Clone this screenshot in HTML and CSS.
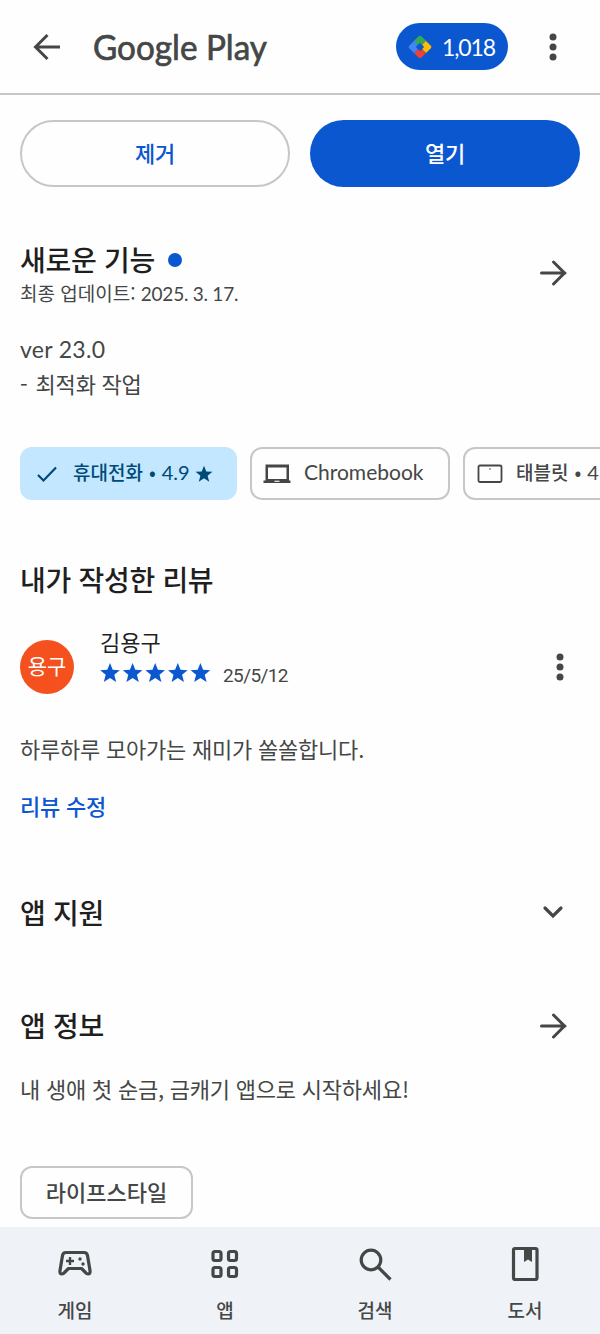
FILE: index.html
```html
<!DOCTYPE html>
<html lang="ko">
<head>
<meta charset="utf-8">
<title>Google Play</title>
<link rel="stylesheet" href="styles.css">
</head>
<body>
<div class="screen">
  <header class="topbar">
    <svg class="back" width="28" height="28" viewBox="0 0 28 28"><path d="M27 14H3M14.500 2L2.500 14l12 12" fill="none" stroke="#444746" stroke-width="3"/></svg>
    <svg class="brand" width="180" height="46" viewBox="0 0 180 46"><text x="0" y="35.500" textLength="174" lengthAdjust="spacingAndGlyphs">Google Play</text></svg>
    <div class="points">
      <svg width="24" height="24" viewBox="0 0 24 24">
        <g transform="rotate(45 12 12)">
          <path d="M12 12H3.500V5.500q0-2 2-2H12z" fill="#4285f4"/>
          <path d="M3.500 13V5.500q0-2 2-2H12.500V12z" fill="#34a853"/>
          <path d="M12 12V3.500h6.500q2 0 2 2V12z" fill="#fbbc04"/>
          <path d="M12 12h8.500v6.500q0 2-2 2H12z" fill="#ea4335"/>
          <path d="M12 12v8.500H5.500q-2 0-2-2V12z" fill="#4285f4"/>
          <rect x="9" y="9" width="6" height="6" rx="1" fill="#0b57d0"/>
        </g>
      </svg>
      <span>1,018</span>
    </div>
    <svg class="more" width="8" height="28" viewBox="0 0 8 28" fill="#444746"><circle cx="4" cy="4" r="3.500"/><circle cx="4" cy="14" r="3.500"/><circle cx="4" cy="24" r="3.500"/></svg>
  </header>

  <main class="content">
    <div class="actions">
      <button class="btn outline">제거</button>
      <button class="btn filled">열기</button>
    </div>

    <section class="whats-new">
      <div class="row">
        <div>
          <h2 class="title">새로운 기능<i class="dot"></i></h2>
          <p class="updated">최종 업데이트: <span class="date">2025. 3. 17.</span></p>
        </div>
        <svg class="arrow" width="28" height="28" viewBox="0 0 28 28"><path d="M2.500 14H26M14.500 3l11 11-11 11" /></svg>
      </div>
      <div class="body notes"><p class="version">ver 23.0</p><p><span class="dash">-</span> 최적화 작업</p></div>
    </section>

    <div class="devices">
      <div class="chip selected">
        <svg width="20" height="20" viewBox="0 0 20 20"><path d="M1 11l5.500 5.500L19 3.500" fill="none" stroke="#004a77" stroke-width="2.200"/></svg>
        <span class="phone">휴대전화<i class="sep">•</i><i class="score">4.9</i></span>
        <svg class="chip-star" width="18" height="18" viewBox="0 0 24 24"><path fill="#004a77" d="M12 1l3 7.700 8.200.4-6.400 5.200 2.200 8-7-4.500-7 4.500 2.200-8L.8 9.100 9 8.700z"/></svg>
      </div>
      <div class="chip laptop">
        <svg width="28" height="22" viewBox="0 0 28 22"><path d="M2.500 1.500H26V18H2.500z" fill="#444746"/><path d="M5 4.500h18.500v11.500H5z" fill="#fff"/><path d="M.5 17.500h27V20H.5z" fill="#444746"/><path d="M11.500 17.700h5v1.100h-5z" fill="#fff"/></svg>
        <span>Chromebook</span>
      </div>
      <div class="chip tablet">
        <svg width="26" height="20" viewBox="0 0 26 20"><rect x="1.500" y="1.500" width="23" height="16.500" rx="1.500" fill="none" stroke="#444746" stroke-width="1.800"/><circle cx="13" cy="5" r=".8" fill="#444746"/></svg>
        <span>태블릿<i class="sep">•</i><i class="score">4</i></span>
      </div>
    </div>

    <section class="review">
      <h2 class="title">내가 작성한 리뷰</h2>
      <div class="reviewer">
        <div class="avatar">용구</div>
        <div class="who">
          <div class="name">김용구</div>
          <div class="rating">
            <svg width="112" height="20" viewBox="0 0 112 20" fill="#0b57d0">
              <defs><path id="star" d="M10 0l2.700 6.800 7.100.4-5.500 4.600 1.900 7.200-6.200-4-6.200 4 1.900-7.200L.2 7.200l7.100-.4z"/></defs>
              <use href="#star"/><use href="#star" x="22.600"/><use href="#star" x="45.200"/><use href="#star" x="67.800"/><use href="#star" x="90.400"/>
            </svg>
            <span>25/5/12</span>
          </div>
        </div>
        <svg class="review-more" width="8" height="28" viewBox="0 0 8 28" fill="#444746"><circle cx="4" cy="4" r="3.500"/><circle cx="4" cy="14" r="3.500"/><circle cx="4" cy="24" r="3.500"/></svg>
      </div>
      <p class="body comment">하루하루 모아가는 재미가 쏠쏠합니다.</p>
      <a class="edit">리뷰 수정</a>
    </section>

    <section class="row support">
      <h2 class="title">앱 지원</h2>
      <svg class="arrow" width="28" height="28" viewBox="0 0 28 28"><path d="M6 10l8 8 8-8"/></svg>
    </section>

    <section class="row about">
      <h2 class="title">앱 정보</h2>
      <svg class="arrow" width="28" height="28" viewBox="0 0 28 28"><path d="M2.500 14H26M14.500 3l11 11-11 11" /></svg>
    </section>
    <p class="body tagline">내 생애 첫 순금, 금캐기 앱으로 시작하세요!</p>
    <div class="chip category"><span>라이프스타일</span></div>
  </main>

  <nav class="bottom">
    <a><svg width="36" height="36" viewBox="0 0 36 36"><path d="M9 7.500h18q3 0 3.500 3l2.500 15q.4 3.500-1.900 3.500-1.500 0-2.600-1.500L24.500 23.500H11.500l-4 4Q6.400 29 4.900 29 2.600 29 3 25.500l2.500-15q.5-3 3.500-3z" fill="none" stroke="#444746" stroke-width="3.200" stroke-linejoin="round"/><path d="M13 12v8M9 16h8" stroke="#444746" stroke-width="2.400"/><circle cx="23" cy="14" r="1.700" fill="#444746"/><circle cx="26" cy="19" r="1.700" fill="#444746"/></svg>게임</a>
    <a><svg width="36" height="36" viewBox="0 0 36 36" fill="none" stroke="#444746" stroke-width="3.200"><rect x="6" y="6.500" width="8" height="9" rx="2"/><rect x="21.500" y="6.500" width="8" height="9" rx="2"/><rect x="6" y="22.500" width="8" height="9" rx="2"/><rect x="21.500" y="22.500" width="8" height="9" rx="2"/></svg>앱</a>
    <a><svg width="36" height="36" viewBox="0 0 36 36" fill="none" stroke="#444746" stroke-width="3.200"><circle cx="14" cy="15" r="9.800"/><path d="M21 22l12.500 12.500"/></svg>검색</a>
    <a><svg width="36" height="36" viewBox="0 0 36 36"><rect x="6.500" y="3.500" width="23.500" height="31" rx="1.500" fill="none" stroke="#444746" stroke-width="3.200"/><path d="M17 3h8v14l-4-2.500-4 2.500z" fill="#444746"/></svg>도서</a>
  </nav>
</div>
</body>
</html>
```
FILE: styles.css
```css
* { box-sizing: border-box; }
body { margin: 0; background: #fefefe; font-family: "Noto Sans CJK KR", sans-serif; color: #444746; }
h2, p { margin: 0; }
svg { display: block; flex: none; }
.screen { width: 600px; height: 1334px; display: flex; flex-direction: column; overflow: hidden; }

.topbar { height: 95px; flex: none; display: flex; align-items: center; padding: 0 43px 0 33px; border-bottom: 2px solid #c7c7c7; }
.brand { margin-left: 32px; font-family: Lato, sans-serif; font-size: 35px; fill: #444746; stroke: #444746; stroke-width: .7px; overflow: visible; }
.points { width: 112px; height: 47px; margin-left: 123px; border-radius: 24px; background: #0b57d0; color: #fff; display: flex; align-items: center; padding-left: 12px; gap: 10px; font: 23px/46px Lato, sans-serif; letter-spacing: -1.1px; }
.more { margin-left: auto; }

.content { flex: 1; min-height: 0; overflow: hidden; padding: 25px 20px 0; }
.actions { display: grid; grid-template-columns: 1fr 1fr; gap: 20px; }
.btn { height: 67px; border-radius: 34px; font: 500 22px/60px "Noto Sans CJK KR", sans-serif; letter-spacing: -.2px; padding: 0 0 5px; }
.outline { border: 2px solid #c7c7c7; background: #fefefe; color: #0b57d0; }
.filled { border: 0; padding-bottom: 4px; background: #0b57d0; color: #fff; }

.row { display: flex; align-items: center; justify-content: space-between; }
.title { font-size: 28px; line-height: 40px; font-weight: 500; letter-spacing: -.3px; color: #1f1f1f; display: flex; align-items: center; }
.dot { width: 14px; height: 14px; margin: 2px 0 0 13px; border-radius: 50%; background: #0b57d0; }
.arrow { margin-right: 13px; fill: none; stroke: #444746; stroke-width: 3px; stroke-linecap: round; }
.whats-new { margin-top: 52px; }
.whats-new .arrow { margin-bottom: 2px; }
.updated { font-size: 19px; line-height: 28px; }
.date { font-family: Lato, sans-serif; letter-spacing: -.25px; }
.body { font-size: 22px; line-height: 34px; letter-spacing: -.22px; }
.notes { margin-top: 24px; }
.version { font-family: Lato, sans-serif; font-size: 23px; letter-spacing: .3px; }
.dash { letter-spacing: 2px; }

.devices { display: flex; gap: 13px; margin: 47px -20px 0 0; overflow: hidden; }
.chip { height: 53px; flex: none; display: flex; align-items: center; border: 2px solid #c7c7c7; border-radius: 12px; font-size: 19px; line-height: 44px; font-weight: 500; white-space: nowrap; }
.chip span { padding-bottom: 3px; }
.sep { font-style: normal; margin: 0 6px; }
.score { font-family: Lato, sans-serif; font-size: 20px; font-style: normal; font-weight: 400; }
.selected { width: 217px; background: #c2e7ff; border-color: #c2e7ff; color: #004a77; padding-left: 15px; }
.phone { margin-left: 16px; }
.chip-star { margin-left: 5px; }
.laptop { width: 200px; padding-left: 11px; gap: 13px; font: 21px/44px Lato, sans-serif; }
.tablet { width: 200px; padding-left: 12px; gap: 13px; }

.review { margin-top: 59px; }
.reviewer { display: flex; align-items: center; margin-top: 40px; height: 55px; }
.avatar { width: 54px; height: 54px; border-radius: 50%; background: #f4511e; color: #fff; font-size: 21px; line-height: 51px; text-align: center; }
.who { margin: 0 0 17px 26px; }
.name { font-size: 22px; line-height: 30px; color: #1f1f1f; }
.rating { display: flex; align-items: center; gap: 11px; height: 34px; }
.rating span { font-family: Roboto, sans-serif; font-size: 19px; letter-spacing: -.6px; padding-top: 5px; }
.review-more { margin: 0 16px 0 auto; }
.comment { margin-top: 37px; }
.edit { display: block; margin-top: 23px; font-size: 22px; line-height: 34px; font-weight: 500; letter-spacing: -.2px; color: #0b57d0; }
.support { margin-top: 70px; }
.support .arrow { stroke-width: 3.2px; }
.about { margin-top: 73px; }
.about .arrow { margin-top: 2px; }
.tagline { margin-top: 26px; }
.category { width: 173px; margin-top: 61px; justify-content: center; font-size: 22px; }

.bottom { height: 107px; flex: none; display: grid; grid-template-columns: repeat(4, 1fr); background: #eff2f7; }
.bottom a { display: flex; flex-direction: column; align-items: center; padding-top: 18px; gap: 15px; font-size: 19px; line-height: 28px; font-weight: 500; }
```
